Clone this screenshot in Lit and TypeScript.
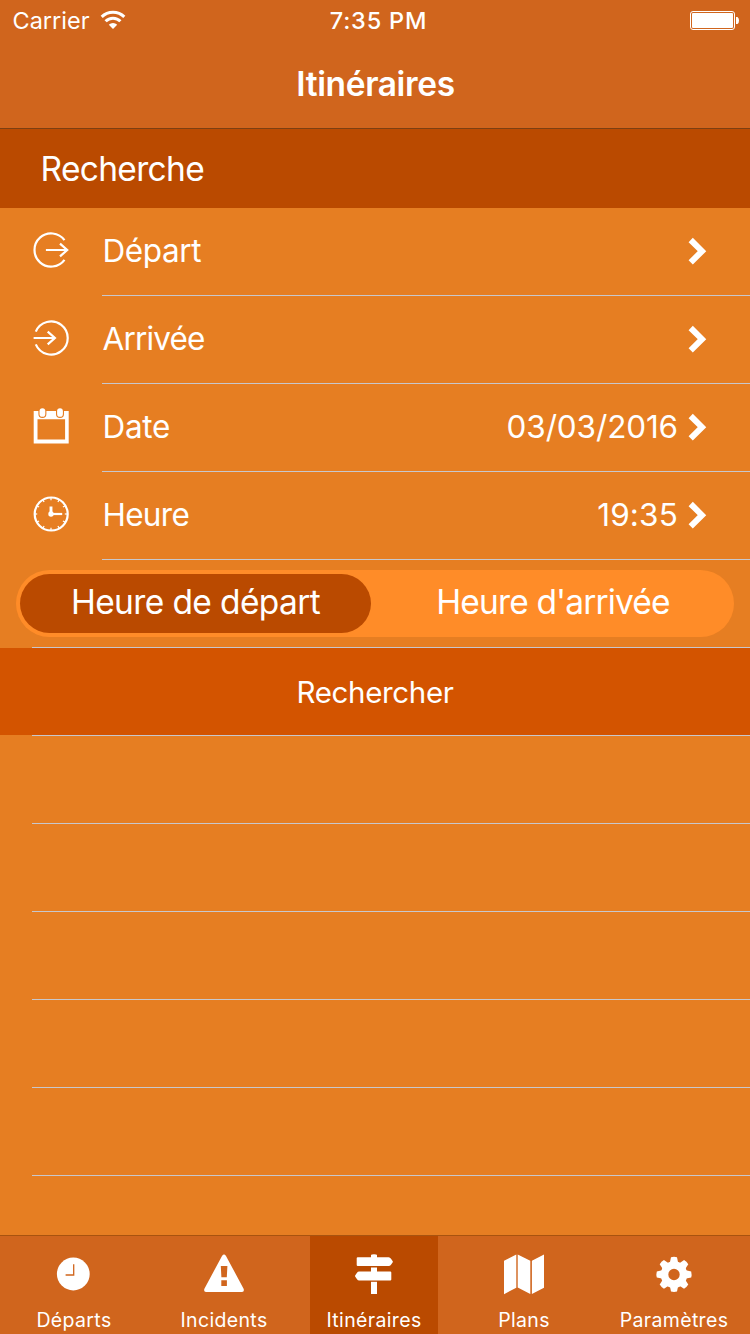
import { LitElement, html, css, svg, type TemplateResult } from "lit";
import { customElement, state } from "lit/decorators.js";
import { classMap } from "lit/directives/class-map.js";

interface Row {
  id: string;
  label: string;
  value: string;
}

interface Tab {
  id: string;
  label: string;
}

const ROWS: Row[] = [
  { id: "depart", label: "Départ", value: "" },
  { id: "arrivee", label: "Arrivée", value: "" },
  { id: "date", label: "Date", value: "03/03/2016" },
  { id: "heure", label: "Heure", value: "19:35" },
];

const TABS: Tab[] = [
  { id: "departs", label: "Départs" },
  { id: "incidents", label: "Incidents" },
  { id: "itineraires", label: "Itinéraires" },
  { id: "plans", label: "Plans" },
  { id: "parametres", label: "Paramètres" },
];

const EMPTY_ROWS = [0, 1, 2, 3, 4];

const clockTicks = [0, 30, 60, 90, 120, 150, 180, 210, 240, 270, 300, 330].map(
  (a) => svg`<path d="M20 3.4V6.2" stroke-width="1.2" transform="rotate(${a} 20 20)" />`
);

/* Line icons of the form rows, drawn on a 40x40 grid. */
const rowIcons: Record<string, TemplateResult> = {
  depart: html`<svg class="icon" viewBox="0 0 40 40" fill="none" stroke="#fff" stroke-width="2.2">
    <path d="M33.5 10.2A16.6 16.6 0 1 0 33.5 29.8" />
    <path d="M14.9 20H36.2M29 13.6L36.2 20L29 26.4" />
  </svg>`,
  arrivee: html`<svg class="icon" viewBox="0 0 40 40" fill="none" stroke="#fff" stroke-width="2.2">
    <path d="M4.8 13.6A16.6 16.6 0 1 1 4.8 26.4" />
    <path d="M2.6 20H23.6M16.7 13.6L23.9 20L16.7 26.4" />
  </svg>`,
  date: html`<svg class="icon" viewBox="0 0 40 40">
    <path d="M2.7 5H37.7V37.5H2.7ZM6.5 13.2V33.5H34.1V13.2Z" fill="#fff" fill-rule="evenodd" />
    <rect x="7.4" y="1" width="8" height="11" rx="4" fill="#e67e22" />
    <rect x="25" y="1" width="8" height="11" rx="4" fill="#e67e22" />
    <rect x="8.5" y="2.2" width="5.8" height="8.6" rx="2.9" fill="#fff" />
    <rect x="26.1" y="2.2" width="5.8" height="8.6" rx="2.9" fill="#fff" />
  </svg>`,
  heure: html`<svg class="icon" viewBox="0 0 40 40" fill="none" stroke="#fff" stroke-width="2.2">
    <circle cx="20.2" cy="20" r="16.5" />
    ${clockTicks}
    <path d="M20 12.5V20" stroke-width="2.9" />
    <path d="M20 20H31.2" stroke-width="2.2" />
    <circle cx="20" cy="20" r="2.7" fill="#fff" stroke="none" />
  </svg>`,
};

const gearTeeth = [0, 45, 90, 135, 180, 225, 270, 315].map(
  (a) => svg`<path d="M17 3.2Q20 2.4 23 3.2L24.3 9.5H15.7Z" transform="rotate(${a} 20 20.4)" />`
);

/* Solid tab bar glyphs, drawn on a 40x40 grid. */
const tabIcons: Record<string, TemplateResult> = {
  departs: html`<svg class="glyph" viewBox="0 0 40 40">
    <circle cx="19.3" cy="20" r="16.4" />
    <path d="M19.7 10.2V21H11.6" fill="none" stroke="#d0651d" stroke-width="1.3" />
  </svg>`,
  incidents: html`<svg class="glyph" viewBox="0 0 40 40">
    <path
      fill-rule="evenodd"
      d="M18 1.9Q20 -.7 22 1.9L39.6 34.8Q40.6 37.8 38 38H2Q-.6 37.8 .4 34.8ZM16.8 12L17.4 23.2H22.8L23.4 12ZM17.3 26.3V32.1H22.9V26.3Z"
    />
  </svg>`,
  itineraires: html`<svg class="glyph" viewBox="0 0 40 40">
    <path d="M17 3.3V1.3Q17 .7 18 .6Q20 0 22 .6Q23 .7 23 1.3V3.3H34.6Q36.2 3.4 37 4.7L38.6 7Q39.2 7.7 38.6 8.5L37 10.8Q36.2 12 34.6 12.1H3.8Q2.7 12.1 2.7 11.1V4.3Q2.7 3.3 3.8 3.3Z" />
    <path d="M17 13.5H23V17.5H36.2Q37.3 17.5 37.3 18.5V25.4Q37.3 26.4 36.2 26.4H5.2Q3.8 26.4 3 25.2L1.3 22.8Q.8 22 1.3 21.3L3 18.8Q3.8 17.5 5.2 17.5H17Z" />
    <path d="M17 27.8H23V40H17Z" />
  </svg>`,
  plans: html`<svg class="glyph" viewBox="0 0 40 40">
    <path d="M0 6.7L12.3 .5V33.8L0 40.2ZM13.7 .5L26.3 6.7V40L13.7 33.6ZM27.9 6.7L40 .5V33.8L27.9 40Z" />
  </svg>`,
  parametres: html`<svg class="glyph" viewBox="0 0 40 40">
    ${gearTeeth}
    <circle cx="20" cy="20.5" r="9.5" fill="none" stroke="#fff" stroke-width="7.6" />
  </svg>`,
};

@customElement("app-root")
export class AppRoot extends LitElement {
  static styles = css`
    :host {
      display: flex;
      flex-direction: column;
      width: 750px;
      height: 1334px;
      overflow: hidden;
      background: #e67e22;
      color: #fff;
      font-family: Inter, "Liberation Sans", sans-serif;
    }
    svg {
      display: block;
      flex: none;
    }
    .header {
      flex: none;
      height: 128px;
      background: #d0651d;
      border-bottom: 1px solid #7d3f12;
    }
    .status {
      display: grid;
      grid-template-columns: 1fr auto 1fr;
      align-items: center;
      height: 40px;
      font-size: 23.5px;
      line-height: 38px;
    }
    .carrier {
      display: flex;
      align-items: center;
      gap: 10.5px;
      padding: 2px 0 0 12.5px;
    }
    .wifi {
      margin-top: -2px;
    }
    .time {
      padding: 2px 0 0 7px;
      font-weight: 500;
      letter-spacing: 0.82px;
    }
    .battery {
      justify-self: end;
      margin: 1px 10px 0 0;
    }
    .title {
      height: 88px;
      margin: 0;
      padding-left: 1px;
      font-size: 33.5px;
      font-weight: 600;
      line-height: 88px;
      letter-spacing: -0.37px;
      text-align: center;
    }
    .section {
      flex: none;
      height: 79px;
      padding-left: 40.5px;
      background: #ba4a00;
      font-size: 33.5px;
      line-height: 80px;
      letter-spacing: -0.67px;
    }
    .row {
      display: flex;
      flex: none;
      height: 88px;
    }
    .lead {
      box-sizing: border-box;
      width: 102px;
      padding: 22px 0 0 31.3px;
    }
    .icon {
      width: 40px;
      height: 40px;
    }
    .body {
      display: flex;
      flex: 1;
      justify-content: space-between;
      padding: 0 43px 1px 0.5px;
      border-bottom: 1px solid #c8c7cc;
      font-size: 31.5px;
      line-height: 86px;
    }
    .end {
      display: flex;
      align-items: center;
      gap: 9px;
    }
    .l-depart {
      letter-spacing: -0.4px;
    }
    .l-arrivee {
      letter-spacing: -0.85px;
    }
    .l-date {
      letter-spacing: -0.28px;
    }
    .l-heure {
      letter-spacing: -0.7px;
    }
    .v-date {
      letter-spacing: -0.14px;
    }
    .v-heure {
      letter-spacing: 0.16px;
    }
    .choice {
      flex: none;
      height: 87px;
    }
    .segmented {
      display: grid;
      grid-template-columns: 351px 1fr;
      box-sizing: border-box;
      height: 67px;
      margin: 10px 16px;
      padding: 4px 0 4px 4px;
      border-radius: 34px;
      background: #ff8c28;
    }
    .segment {
      height: 59px;
      border-radius: 30px;
      font-size: 33.5px;
      line-height: 57px;
      letter-spacing: -0.62px;
      text-align: center;
      white-space: nowrap;
    }
    .segment + .segment {
      padding-left: 1px;
      letter-spacing: -0.86px;
    }
    .segment.selected {
      background: #ba4a00;
    }
    .rule {
      flex: none;
      height: 1px;
      margin-left: 32px;
      background: #c8c7cc;
    }
    .search {
      flex: none;
      height: 87px;
      background: #d35400;
      font-size: 29.5px;
      line-height: 88px;
      letter-spacing: -0.34px;
      text-align: center;
    }
    .blank {
      flex: none;
      height: 87px;
      margin-left: 32px;
      border-bottom: 1px solid #c8c7cc;
    }
    .tabs {
      display: grid;
      grid-template-columns: repeat(5, 128px);
      column-gap: 22px;
      height: 98px;
      margin-top: auto;
      padding-left: 10px;
      border-top: 1px solid #a8530f;
      background: #d0651d;
    }
    .tab {
      display: flex;
      flex-direction: column;
      align-items: center;
      padding-top: 18px;
    }
    .tab.current {
      background: #ba4a00;
    }
    .glyph {
      width: 40px;
      height: 40px;
      overflow: visible;
      fill: #fff;
    }
    .caption {
      margin-top: 14px;
      font-size: 19.5px;
      line-height: 24px;
      letter-spacing: 0.35px;
      white-space: nowrap;
    }
  `;

  @state() private segment = 0;
  @state() private tab = "itineraires";

  private renderRow(row: Row) {
    return html`<div class="row">
      <div class="lead">${rowIcons[row.id]}</div>
      <div class="body">
        <span class="l-${row.id}">${row.label}</span>
        <span class="end">
          <span class="v-${row.id}">${row.value}</span>
          <svg width="20" height="30" viewBox="0 0 20 30">
            <path
              d="M3.7 4L15 15.2L3.7 26.4"
              fill="none"
              stroke="#fff"
              stroke-width="6"
            />
          </svg>
        </span>
      </div>
    </div>`;
  }

  render() {
    return html`
      <header class="header">
        <div class="status">
          <span class="carrier">
            Carrier
            <svg class="wifi" width="26" height="20" viewBox="0 0 26 20" fill="none" stroke="#fff" stroke-width="3">
              <path d="M1.7 6.9A16 16 0 0 1 24.3 6.9" />
              <path d="M5.6 11.3A10.3 10.3 0 0 1 20.4 11.3" />
              <path d="M13 19L8.8 14.8A6 6 0 0 1 17.2 14.8Z" fill="#fff" stroke="none" />
            </svg>
          </span>
          <span class="time">7:35 PM</span>
          <svg class="battery" width="50" height="20" viewBox="0 0 50 20">
            <rect x=".5" y=".5" width="44" height="18" rx="2.5" fill="none" stroke="#fff" />
            <rect x="2" y="2" width="41" height="15" rx="1" fill="#fff" />
            <path d="M46 6H47.5Q49 7 49 9.5T47.5 13H46Z" fill="#fff" />
          </svg>
        </div>
        <h1 class="title">Itinéraires</h1>
      </header>
      <div class="section">Recherche</div>
      ${ROWS.map((row) => this.renderRow(row))}
      <div class="choice">
        <div class="segmented">
          ${["Heure de départ", "Heure d'arrivée"].map(
            (label, i) => html`<div
              class=${classMap({ segment: true, selected: i === this.segment })}
              @click=${() => (this.segment = i)}
            >${label}</div>`
          )}
        </div>
      </div>
      <div class="rule"></div>
      <div class="search">Rechercher</div>
      <div class="rule"></div>
      ${EMPTY_ROWS.map(() => html`<div class="blank"></div>`)}
      <nav class="tabs">
        ${TABS.map(
          (t) => html`<div
            class=${classMap({ tab: true, current: t.id === this.tab })}
            @click=${() => (this.tab = t.id)}
          >
            ${tabIcons[t.id]}
            <span class="caption">${t.label}</span>
          </div>`
        )}
      </nav>
    `;
  }
}
